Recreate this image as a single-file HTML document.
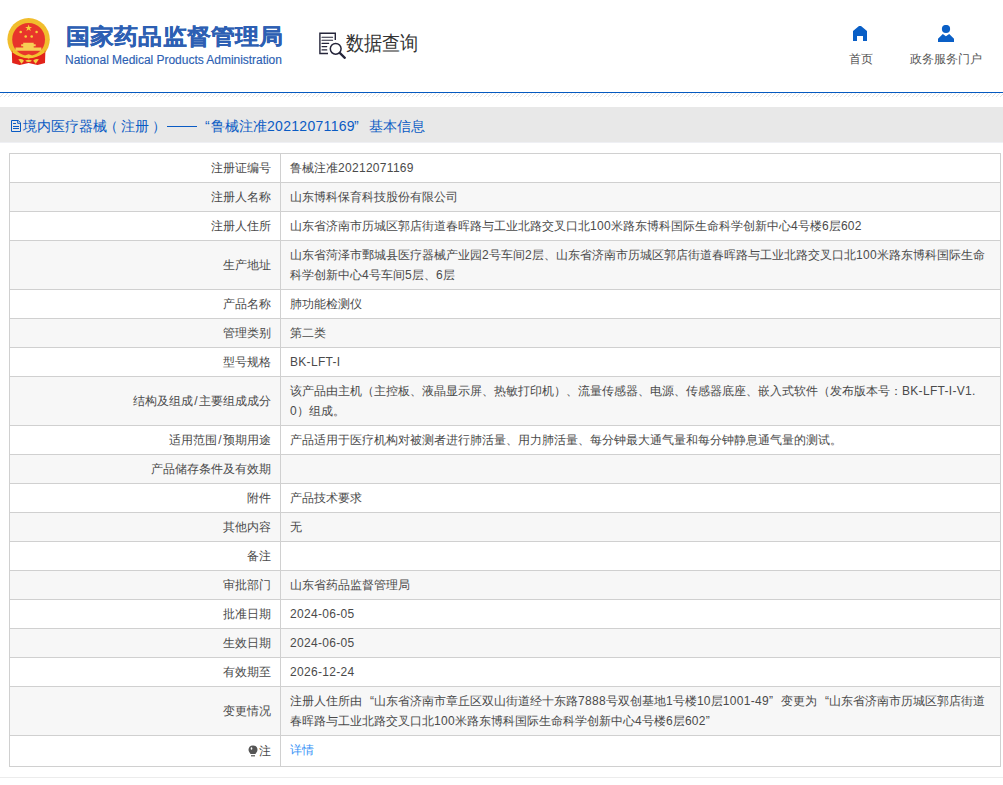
<!DOCTYPE html>
<html><head><meta charset="utf-8">
<style>
*{margin:0;padding:0;box-sizing:border-box}
html,body{width:1003px;height:785px;overflow:hidden;background:#fff;font-family:"Liberation Sans",sans-serif;position:relative}
.abs{position:absolute;white-space:nowrap}
#title{left:66px;top:21px;font-size:24px;font-weight:bold;color:#2d5fb3;line-height:30px;-webkit-text-stroke:0.25px #2d5fb3;letter-spacing:0.15px;transform:scaleY(0.92);transform-origin:0 26px}
#eng{left:65px;top:53px;font-size:12px;color:#2d5fb3;line-height:14px;-webkit-text-stroke:0.15px #2d5fb3;letter-spacing:-0.03px}
#query{left:346px;top:30px;font-size:18px;color:#333;line-height:24px;transform:scaleY(1.1);transform-origin:0 3px}
.nav{font-size:12px;color:#555;line-height:14px}
#blue{left:0;top:92px;width:1003px;height:1px;background:#0559c0}
#hatch{left:0;top:93px;width:1003px;height:4px;background:repeating-linear-gradient(135deg,#fff 0,#fff 2px,#ddd 2px,#ddd 3px,#fff 3px,#fff 4px)}
#band{left:0;top:107px;width:1003px;height:35px;background:#e8e8e8}
.bt{top:117px;font-size:14px;color:#0a5bc4;line-height:18px}
#tbl{left:9px;top:153px;width:992px;border:1px solid #d0d0d0;border-bottom:none}
.r{display:flex;border-bottom:1px solid #d0d0d0;font-size:12px;color:#4a4a4a;line-height:20px}
.r:nth-child(even){background:#f7f7f7}
.l{width:271px;text-align:right;padding:4px 9px 4px 0;border-right:1px solid #d0d0d0;flex:none;display:flex;align-items:center;justify-content:flex-end}
.v{padding:4px 0 4px 9px;white-space:nowrap;color:#4a4a4a}
.h1 .l,.h1 .v{height:28px}
.h2 .l,.h2 .v{height:48px}
.h3 .l,.h3 .v{height:30px}
.link{color:#3592f6}
.sl{display:inline-block;width:6px;text-align:center}
.n{letter-spacing:0.3px}
.q1{display:inline-block;width:12px;text-align:right}
.q2{display:inline-block;width:12px;text-align:left}
.bulb{display:inline-block;width:10px;height:12px;margin-right:1px;vertical-align:-1px}
#foot{left:0;top:777px;width:1003px;height:1px;background:#ececec}
</style></head><body>
<!-- emblem -->
<svg class="abs" style="left:0;top:0" width="60" height="70" viewBox="0 0 60 70">
  <circle cx="28.6" cy="39.3" r="21.2" fill="#f1bd2c"/>
  <circle cx="28.6" cy="39.4" r="16.4" fill="#e8352b"/>
  <path d="M23.2 42.7 h10.5 v1.5 h2 v2.1 h-2 v1.2 h7.7 v3.3 h-25.9 v-3.3 h7.7 v-1.2 h-2 v-2.1 h2z" fill="#f7cf55"/>
  <path d="M11.8 50.5 L20.5 55.5 L28.6 58.5 L36.7 55.5 L45.4 50.5 L45 63 L37.5 65 L28.6 63 L19.7 65 L12.2 63 Z" fill="#e2231a"/>
  <path d="M13 50.2 Q28.6 62 44.2 50.2 L45 52.2 Q28.6 64.5 12.2 52.2 Z" fill="#f3c32f"/>
  <path d="M24 56.8 Q28.6 51.5 33.2 56.8 Q28.6 59.5 24 56.8Z" fill="#f5c93a"/>
  <path d="M18.3 59.2 Q22.5 58.2 24 60.8 L21.5 63.8 Z M38.9 59.2 Q34.7 58.2 33.2 60.8 L35.7 63.8 Z M25.2 60.8 Q28.6 58.6 32 60.8 Q28.6 63.2 25.2 60.8Z" fill="#f3d046"/>
  <polygon points="28.6,24.6 29.5,27 32,27 30,28.6 30.8,31 28.6,29.5 26.4,31 27.2,28.6 25.2,27 27.7,27" fill="#f6cf3a"/>
  <circle cx="20.7" cy="32" r="1.3" fill="#f6cf3a"/>
  <circle cx="36.6" cy="32" r="1.3" fill="#f6cf3a"/>
  <circle cx="25.7" cy="36.5" r="1.3" fill="#f6cf3a"/>
  <circle cx="31.7" cy="36.5" r="1.3" fill="#f6cf3a"/>
</svg>
<div id="title" class="abs">国家药品监督管理局</div>
<div id="eng" class="abs">National Medical Products Administration</div>
<!-- query icon -->
<svg class="abs" style="left:318px;top:31px" width="30" height="29" viewBox="0 0 30 29">
  <path d="M17.3 8.9 V2.2 H1.9 V22.5 H10" fill="none" stroke="#25253a" stroke-width="1.4"/>
  <path d="M4 6.3H14.6M4 9.3H14.6M4 12.4H10.7M4 15.6H8.8M4 18.9H8.8" stroke="#25253a" stroke-width="1.1" stroke-linecap="round"/>
  <circle cx="17.7" cy="17.8" r="5.4" fill="none" stroke="#25253a" stroke-width="1.5"/>
  <path d="M22 22.2 L26.8 26.8" stroke="#25253a" stroke-width="2.3" stroke-linecap="round"/>
</svg>
<div id="query" class="abs">数据查询</div>
<!-- nav -->
<svg class="abs" style="left:853px;top:26px" width="14" height="15" viewBox="0 0 14 15">
  <path d="M0 5 L6 0 H8 L14 5 V15 H10 V10 H4 V15 H0 Z" fill="#0a5fc6"/>
</svg>
<div class="abs nav" style="left:849px;top:52px">首页</div>
<svg class="abs" style="left:938px;top:25px" width="17" height="17" viewBox="0 0 17 17">
  <circle cx="8" cy="4" r="4.1" fill="#0a5fc6"/>
  <path d="M0 17 V13.8 L4.8 9 L7.9 11.2 L11.2 9 L16 13.8 V17 Z" fill="#0a5fc6"/>
</svg>
<div class="abs nav" style="left:910px;top:52px">政务服务门户</div>

<div id="blue" class="abs"></div>
<svg class="abs" style="left:0;top:93px" width="1003" height="4"><defs><pattern id="hp" width="4" height="4" patternUnits="userSpaceOnUse"><path d="M-1 5 L5 -1" stroke="#e2e2e2" stroke-width="1"/></pattern></defs><rect width="1003" height="4" fill="url(#hp)"/></svg>
<div id="band" class="abs"></div>
<div class="abs" style="left:0;top:142px;width:1003px;height:1px;background:#eff0f4"></div>
<svg class="abs" style="left:11px;top:120px" width="10" height="12" viewBox="0 0 10 12"><path d="M0.5 0.5 H7.3 L9.5 2.7 V11.5 H0.5 Z" fill="none" stroke="#0a5bc4" stroke-width="1"/><path d="M6.7 0.8 V3.3 H9.3" fill="none" stroke="#0a5bc4" stroke-width="1"/><path d="M2 3.5 H5 M2 6.5 H8 M2 8.5 H8" stroke="#0a5bc4" stroke-width="1"/></svg>
<div class="abs bt" style="left:23px">境内医疗器械</div>
<div class="abs bt" style="left:104px">（</div>
<div class="abs bt" style="left:121px">注册</div>
<div class="abs bt" style="left:152px">）</div>
<div class="abs" style="left:167px;top:126px;width:30px;height:1px;background:#0a5bc4"></div>
<div class="abs bt" style="left:205px">“</div>
<div class="abs bt" style="left:211px">鲁械注准<span style="letter-spacing:0.3px">20212071169</span></div>
<div class="abs bt" style="left:354px">”</div>
<div class="abs bt" style="left:369px">基本信息</div>

<div id="tbl" class="abs">
<div class="r h1"><div class="l">注册证编号</div><div class="v">鲁械注准<span class="n">20212071169</span></div></div>
<div class="r h1"><div class="l">注册人名称</div><div class="v">山东博科保育科技股份有限公司</div></div>
<div class="r h1"><div class="l">注册人住所</div><div class="v">山东省济南市历城区郭店街道春晖路与工业北路交叉口北<span class="n">100</span>米路东博科国际生命科学创新中心<span class="n">4</span>号楼<span class="n">6</span>层<span class="n">602</span></div></div>
<div class="r h2"><div class="l">生产地址</div><div class="v">山东省菏泽市鄄城县医疗器械产业园<span class="n">2</span>号车间<span class="n">2</span>层、山东省济南市历城区郭店街道春晖路与工业北路交叉口北<span class="n">100</span>米路东博科国际生命<br>科学创新中心<span class="n">4</span>号车间<span class="n">5</span>层、<span class="n">6</span>层</div></div>
<div class="r h1"><div class="l">产品名称</div><div class="v">肺功能检测仪</div></div>
<div class="r h1"><div class="l">管理类别</div><div class="v">第二类</div></div>
<div class="r h1"><div class="l">型号规格</div><div class="v"><span class="n">BK-LFT-I</span></div></div>
<div class="r h2"><div class="l">结构及组成<span class="sl">/</span>主要组成成分</div><div class="v">该产品由主机（主控板、液晶显示屏、热敏打印机）、流量传感器、电源、传感器底座、嵌入式软件（发布版本号：<span class="n">BK-LFT-I-V1.</span><br><span class="n">0</span>）组成。</div></div>
<div class="r h1"><div class="l">适用范围<span class="sl">/</span>预期用途</div><div class="v">产品适用于医疗机构对被测者进行肺活量、用力肺活量、每分钟最大通气量和每分钟静息通气量的测试。</div></div>
<div class="r h1"><div class="l">产品储存条件及有效期</div><div class="v"></div></div>
<div class="r h1"><div class="l">附件</div><div class="v">产品技术要求</div></div>
<div class="r h1"><div class="l">其他内容</div><div class="v">无</div></div>
<div class="r h1"><div class="l">备注</div><div class="v"></div></div>
<div class="r h1"><div class="l">审批部门</div><div class="v">山东省药品监督管理局</div></div>
<div class="r h1"><div class="l">批准日期</div><div class="v"><span class="n">2024-06-05</span></div></div>
<div class="r h1"><div class="l">生效日期</div><div class="v"><span class="n">2024-06-05</span></div></div>
<div class="r h1"><div class="l">有效期至</div><div class="v"><span class="n">2026-12-24</span></div></div>
<div class="r h2"><div class="l">变更情况</div><div class="v">注册人住所由<span class="q1">“</span>山东省济南市章丘区双山街道经十东路<span class="n">7888</span>号双创基地<span class="n">1</span>号楼<span class="n">10</span>层<span class="n">1001-49</span><span class="q2">”</span>变更为<span class="q1">“</span>山东省济南市历城区郭店街道<br>春晖路与工业北路交叉口北<span class="n">100</span>米路东博科国际生命科学创新中心<span class="n">4</span>号楼<span class="n">6</span>层<span class="n">602</span><span class="q2">”</span></div></div>
<div class="r h3"><div class="l"><svg class="bulb" viewBox="0 0 10 12"><path d="M5 0.5 C8 0.5 9.5 2.5 9.5 4.8 C9.5 6.8 8 7.8 7.5 9 H2.5 C2 7.8 0.5 6.8 0.5 4.8 C0.5 2.5 2 0.5 5 0.5Z" fill="#555"/><ellipse cx="3.5" cy="3.5" rx="0.8" ry="1.3" fill="#fff"/><rect x="3" y="10.2" width="4" height="1.2" fill="#555"/></svg>注</div><div class="v"><span class="link">详情</span></div></div>
</div>
<div id="foot" class="abs"></div>
</body></html>
